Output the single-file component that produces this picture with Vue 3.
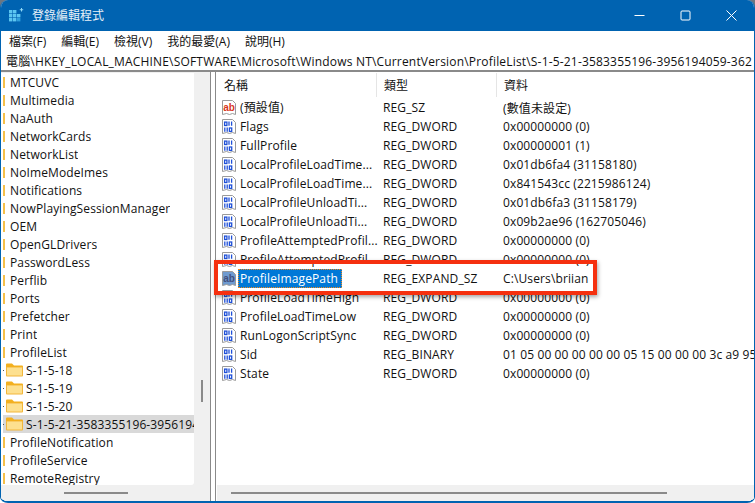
<template>
  <div class="window">
    <div class="titlebar">
      <svg class="app-icon" width="15" height="14" viewBox="0 0 15 14">
        <rect v-for="c in appCells" :key="c.x + '-' + c.y" :x="c.x" :y="c.y" width="3.4" height="3.4" :fill="c.f" />
        <path d="M12 0h1v1.2h1.2v1H13v1.2h-1V2.2h-1.2v-1H12z" fill="#8fd8f5" />
      </svg>
      <span class="title">登錄編輯程式</span>
      <div class="controls">
        <svg width="11" height="11" viewBox="0 0 11 11"><path d="M0.5 5.5h10" stroke="#fff" fill="none" /></svg>
        <svg width="11" height="11" viewBox="0 0 11 11"><rect x="1" y="1" width="9" height="9" rx="1" stroke="#fff" fill="none" /></svg>
        <svg width="11" height="11" viewBox="0 0 11 11"><path d="M0.5 0.5l10 10M10.5 0.5l-10 10" stroke="#fff" fill="none" /></svg>
      </div>
    </div>

    <div class="menubar">
      <span v-for="m in menus" :key="m">{{ m }}</span>
    </div>

    <div class="address">電腦\HKEY_LOCAL_MACHINE\SOFTWARE\Microsoft\Windows NT\CurrentVersion\ProfileList\S-1-5-21-3583355196-3956194059-362</div>

    <div class="panes">
      <div class="tree-pane">
        <div class="tree-body">
          <div class="tree-list">
            <div
              v-for="t in treeItems"
              :key="t.name"
              class="tree-row"
              :class="{ child: t.child, selected: t.selected }"
            >
              <template v-if="t.child">
                <i class="dot"></i>
                <svg class="folder" width="17" height="14" viewBox="0 0 17 14">
                  <path d="M0 1.5a1 1 0 0 1 1-1h5l2 2h8a1 1 0 0 1 1 1v1H0z" fill="#f3b01f" />
                  <path d="M0 4h17v8.5a1 1 0 0 1-1 1H1a1 1 0 0 1-1-1z" fill="#f2b63a" />
                  <path d="M1 4.6h15v7.9H1z" fill="#fde08f" />
                </svg>
              </template>
              <i v-else class="stub"></i>
              <span class="tree-name">{{ t.name }}</span>
            </div>
          </div>
          <div class="vscroll"><i></i></div>
        </div>
        <div class="hscroll tree-h"><i></i></div>
      </div>

      <div class="splitter"></div>

      <div class="list-pane">
        <div class="list-header">
          <span class="col-name">名稱</span>
          <span class="col-type">類型</span>
          <span class="col-data">資料</span>
        </div>
        <div class="list-body">
          <div v-for="r in rows" :key="r.id" class="list-row">
            <span class="col-name cell-name">
              <svg class="reg-icon" width="16" height="16" viewBox="0 0 16 16">
                <path d="M1.5 .5h10l3 3v11l-3-1-3 1-3-1-4 1z" :fill="r.active ? '#6f9bd0' : '#fff'" stroke="#9a9a9a" />
                <template v-if="r.kind === 'sz'">
                  <text x="8" y="11" text-anchor="middle" class="ab" :fill="r.active ? '#44507e' : '#d8361c'">ab</text>
                </template>
                <template v-else>
                  <g fill="none" stroke="#1f50d8" stroke-width="1.3">
                    <rect x="3.6" y="3.1" width="2.3" height="3.4" />
                    <path d="M8 2.6v4.2M10.6 2.6v4.2" />
                    <path d="M3.8 8.6v4.2M6.2 8.6v4.2" />
                    <rect x="8.4" y="9" width="2.3" height="3.4" />
                  </g>
                </template>
              </svg>
              <span class="name-text" :class="{ active: r.active }">{{ r.name }}</span>
            </span>
            <span class="col-type">{{ r.type }}</span>
            <span class="col-data">{{ r.data }}</span>
          </div>
        </div>
        <div class="hscroll list-h"><i></i></div>
      </div>
    </div>

    <div class="callout"></div>
  </div>
</template>

<script setup>
const menus = ['檔案(F)', '編輯(E)', '檢視(V)', '我的最愛(A)', '說明(H)']

const appCells = []
for (let y = 0; y < 3; y++) {
  for (let x = 0; x < 3; x++) {
    if (x === 2 && y === 0) continue
    appCells.push({ x: x * 4, y: y * 4 + 2, f: y === 2 && x === 2 ? '#2f9fdc' : '#5cc6f0' })
  }
}

const treeNames = [
  'MTCUVC', 'Multimedia', 'NaAuth', 'NetworkCards', 'NetworkList', 'NoImeModeImes',
  'Notifications', 'NowPlayingSessionManager', 'OEM', 'OpenGLDrivers', 'PasswordLess',
  'Perflib', 'Ports', 'Prefetcher', 'Print', 'ProfileList'
]
const treeItems = [
  ...treeNames.map((name) => ({ name })),
  { name: 'S-1-5-18', child: true },
  { name: 'S-1-5-19', child: true },
  { name: 'S-1-5-20', child: true },
  { name: 'S-1-5-21-3583355196-3956194059-3627', child: true, selected: true },
  { name: 'ProfileNotification' },
  { name: 'ProfileService' },
  { name: 'RemoteRegistry' }
]

const dw = 'REG_DWORD'
const rows = [
  { name: '(預設值)', kind: 'sz', type: 'REG_SZ', data: '(數值未設定)' },
  { name: 'Flags', type: dw, data: '0x00000000 (0)' },
  { name: 'FullProfile', type: dw, data: '0x00000001 (1)' },
  { name: 'LocalProfileLoadTime...', type: dw, data: '0x01db6fa4 (31158180)' },
  { name: 'LocalProfileLoadTime...', type: dw, data: '0x841543cc (2215986124)' },
  { name: 'LocalProfileUnloadTi...', type: dw, data: '0x01db6fa3 (31158179)' },
  { name: 'LocalProfileUnloadTi...', type: dw, data: '0x09b2ae96 (162705046)' },
  { name: 'ProfileAttemptedProfil...', type: dw, data: '0x00000000 (0)' },
  { name: 'ProfileAttemptedProfil...', type: dw, data: '0x00000000 (0)' },
  { name: 'ProfileImagePath', kind: 'sz', active: true, type: 'REG_EXPAND_SZ', data: 'C:\\Users\\briian' },
  { name: 'ProfileLoadTimeHigh', type: dw, data: '0x00000000 (0)' },
  { name: 'ProfileLoadTimeLow', type: dw, data: '0x00000000 (0)' },
  { name: 'RunLogonScriptSync', type: dw, data: '0x00000000 (0)' },
  { name: 'Sid', type: 'REG_BINARY', data: '01 05 00 00 00 00 00 05 15 00 00 00 3c a9 95' },
  { name: 'State', type: dw, data: '0x00000000 (0)' }
].map((r, id) => ({ ...r, id }))
</script>

<style>
html,
body {
  margin: 0;
  overflow: hidden;
  background: linear-gradient(#6e7680 50%, #fff 50%);
}
</style>

<style scoped>
.window {
  position: relative;
  box-sizing: border-box;
  width: 755px;
  height: 503px;
  display: flex;
  flex-direction: column;
  overflow: hidden;
  background: #f0f0f0;
  border: solid #0063b1;
  border-width: 0 1px 2px 1px;
  border-radius: 8px 8px 8px 8px / 8px 8px 6px 6px;
  font-family: "Open Sans", "Noto Sans CJK TC", sans-serif;
  font-size: 12px;
  letter-spacing: 0.12px;
  color: #111;
}

.titlebar {
  height: 31px;
  flex: none;
  display: flex;
  align-items: center;
  background: #0063b1;
  color: #e8f1f8;
  padding-left: 8px;
  padding-bottom: 1px;
  box-sizing: border-box;
}

.app-icon {
  margin-right: 8px;
}

.title {
  font-size: 12px;
  letter-spacing: 0;
}

.controls {
  margin-left: auto;
  display: flex;
  gap: 35px;
  padding-right: 17px;
}

.menubar {
  height: 21px;
  flex: none;
  display: flex;
  align-items: center;
  gap: 15px;
  padding: 0 0 2px 8px;
  box-sizing: border-box;
  background: #fff;
  letter-spacing: 0;
}

.address {
  height: 18px;
  flex: none;
  line-height: 20px;
  padding-left: 5px;
  background: #fff;
  border-bottom: 2px solid #8a8a8a;
  white-space: nowrap;
  overflow: hidden;
  letter-spacing: 0.18px;
}

.panes {
  flex: 1;
  min-height: 0;
  display: flex;
  background: #f0f0f0;
}

.tree-pane {
  width: 209px;
  flex: none;
  display: flex;
  flex-direction: column;
  padding-top: 1px;
  box-sizing: border-box;
}

.tree-body {
  flex: 1;
  min-height: 0;
  display: flex;
}

.tree-list {
  width: 193px;
  flex: none;
  background: #fff;
  overflow: hidden;
  border-radius: 0 0 3px 0;
}

.tree-row {
  height: 18px;
  display: flex;
  align-items: center;
  white-space: nowrap;
  padding-left: 2px;
}

.tree-row.selected {
  background: #d9d9d9;
  margin-left: 2px;
  padding-left: 0;
}

.dot {
  width: 1px;
  height: 1px;
  margin-right: 1px;
  background: #555;
  flex: none;
}

.stub {
  width: 2px;
  height: 11px;
  background: #f5c04a;
  margin-right: 5px;
  flex: none;
}

.folder {
  margin: 0 3px 0 1px;
  flex: none;
}

.tree-name {
  overflow: hidden;
}

.vscroll {
  flex: 1;
  position: relative;
}

.vscroll i {
  position: absolute;
  left: 7px;
  top: 307px;
  width: 2px;
  height: 22px;
  background: #8a8a8a;
}

.hscroll {
  height: 16px;
  flex: none;
  display: flex;
  align-items: center;
  background: #f0f0f0;
}

.hscroll i {
  height: 2px;
  background: #8a8a8a;
  display: block;
}

.tree-h i {
  width: 64px;
  margin-left: 63px;
}

.list-h i {
  width: 436px;
  margin-left: 14px;
}

.splitter {
  width: 6px;
  flex: none;
  box-sizing: border-box;
  border-left: 1px solid #8a8a8a;
  border-right: 1px solid #8a8a8a;
  background: #fff;
}

.list-pane {
  flex: 1;
  min-width: 0;
  display: flex;
  flex-direction: column;
  background: #fff;
  padding-left: 1px;
}

.list-header {
  height: 26px;
  flex: none;
  display: flex;
  align-items: center;
}

.list-header span {
  height: 24px;
  display: flex;
  align-items: center;
  box-sizing: border-box;
  border-right: 1px solid #e5e5e5;
  padding-left: 7px;
}

.list-header .col-data {
  border-right: none;
}

.list-body {
  flex: 1;
  min-height: 0;
  overflow: hidden;
}

.list-row {
  height: 19px;
  display: flex;
  align-items: center;
  white-space: nowrap;
}

.col-name {
  width: 160px;
  flex: none;
}

.col-type {
  width: 120px;
  flex: none;
  box-sizing: border-box;
}

.col-data {
  flex: 1;
  min-width: 0;
  overflow: hidden;
}

.list-row .col-type,
.list-row .col-data {
  padding-left: 6px;
}

.cell-name {
  display: flex;
  align-items: center;
  padding-left: 4px;
  box-sizing: border-box;
}

.reg-icon {
  flex: none;
  margin-right: 1px;
}

.ab {
  font-family: "Liberation Sans", sans-serif;
  font-size: 10px;
  font-weight: 700;
  letter-spacing: 0;
}

.name-text {
  padding: 0 2px;
  line-height: 19px;
}

.name-text.active {
  background: #0078d7;
  color: #fff;
  outline: 1px dotted #f08a1e;
  outline-offset: -1px;
  padding-right: 4px;
}

.callout {
  position: absolute;
  left: 213px;
  top: 260px;
  width: 383px;
  height: 35px;
  box-sizing: border-box;
  border: 4px solid #f5300f;
  box-shadow: 1px 2px 4px rgba(0, 0, 0, 0.35);
}
</style>
